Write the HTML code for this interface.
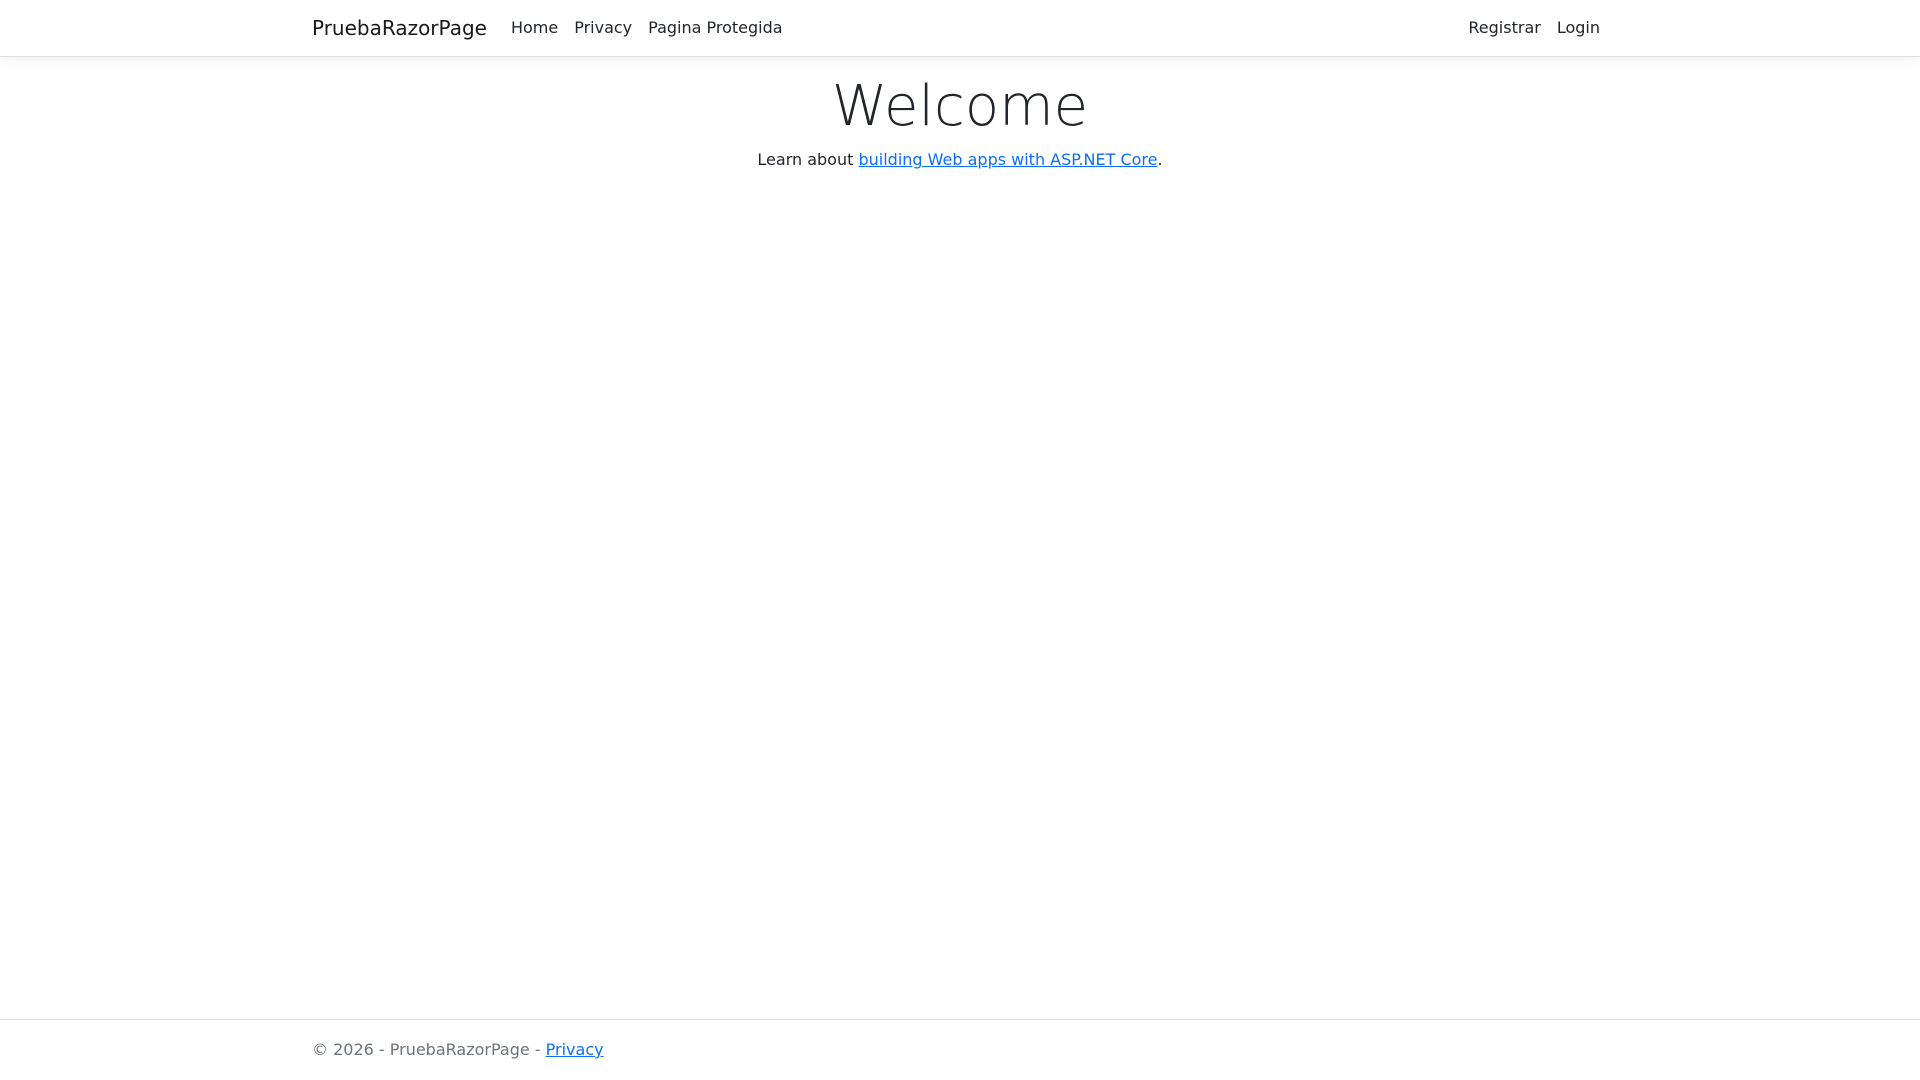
<!DOCTYPE html>
<html><head><meta charset="utf-8"><style>
html{font-size:16px;position:relative;height:1080px;overflow:hidden}
*{box-sizing:border-box}
body{margin:0;font-family:"DejaVu Sans","Liberation Sans",sans-serif;font-size:16px;line-height:1.5;color:#212529;background:#fff}
.container{width:1320px;margin:0 auto;padding:0 12px}
nav{background:#fff;border-bottom:1px solid #dee2e6;box-shadow:0 .25rem .75rem rgba(0,0,0,.05);margin-bottom:16px;padding:8px 0}
nav .container{display:flex;align-items:center}
.brand{font-size:20px;color:rgba(0,0,0,.9);padding:5px 0;margin-right:16px;text-decoration:none;line-height:30px}
.nav a{color:#212529;text-decoration:none;padding:8px;display:inline-block;line-height:24px}
.nav{display:flex}
.grow{flex:1}
h1{font-size:56px;font-weight:300;line-height:1.2;margin:4px 0 8px;text-align:center}
p{text-align:center;margin:0 0 16px}
a.l{color:#0d6efd;text-decoration:underline}
footer{position:absolute;bottom:0;left:0;width:100%;border-top:1px solid #dee2e6;line-height:60px;white-space:nowrap;color:#6c757d}
</style></head><body>
<nav><div class="container"><a class="brand">PruebaRazorPage</a><div class="nav grow"><a>Home</a><a>Privacy</a><a>Pagina Protegida</a></div><div class="nav"><a>Registrar</a><a>Login</a></div></div></nav>
<div class="container"><h1>Welcome</h1><p>Learn about <a class="l">building Web apps with ASP.NET Core</a>.</p></div>
<footer><div class="container">© 2026 - PruebaRazorPage - <a class="l">Privacy</a></div></footer>
</body></html>
